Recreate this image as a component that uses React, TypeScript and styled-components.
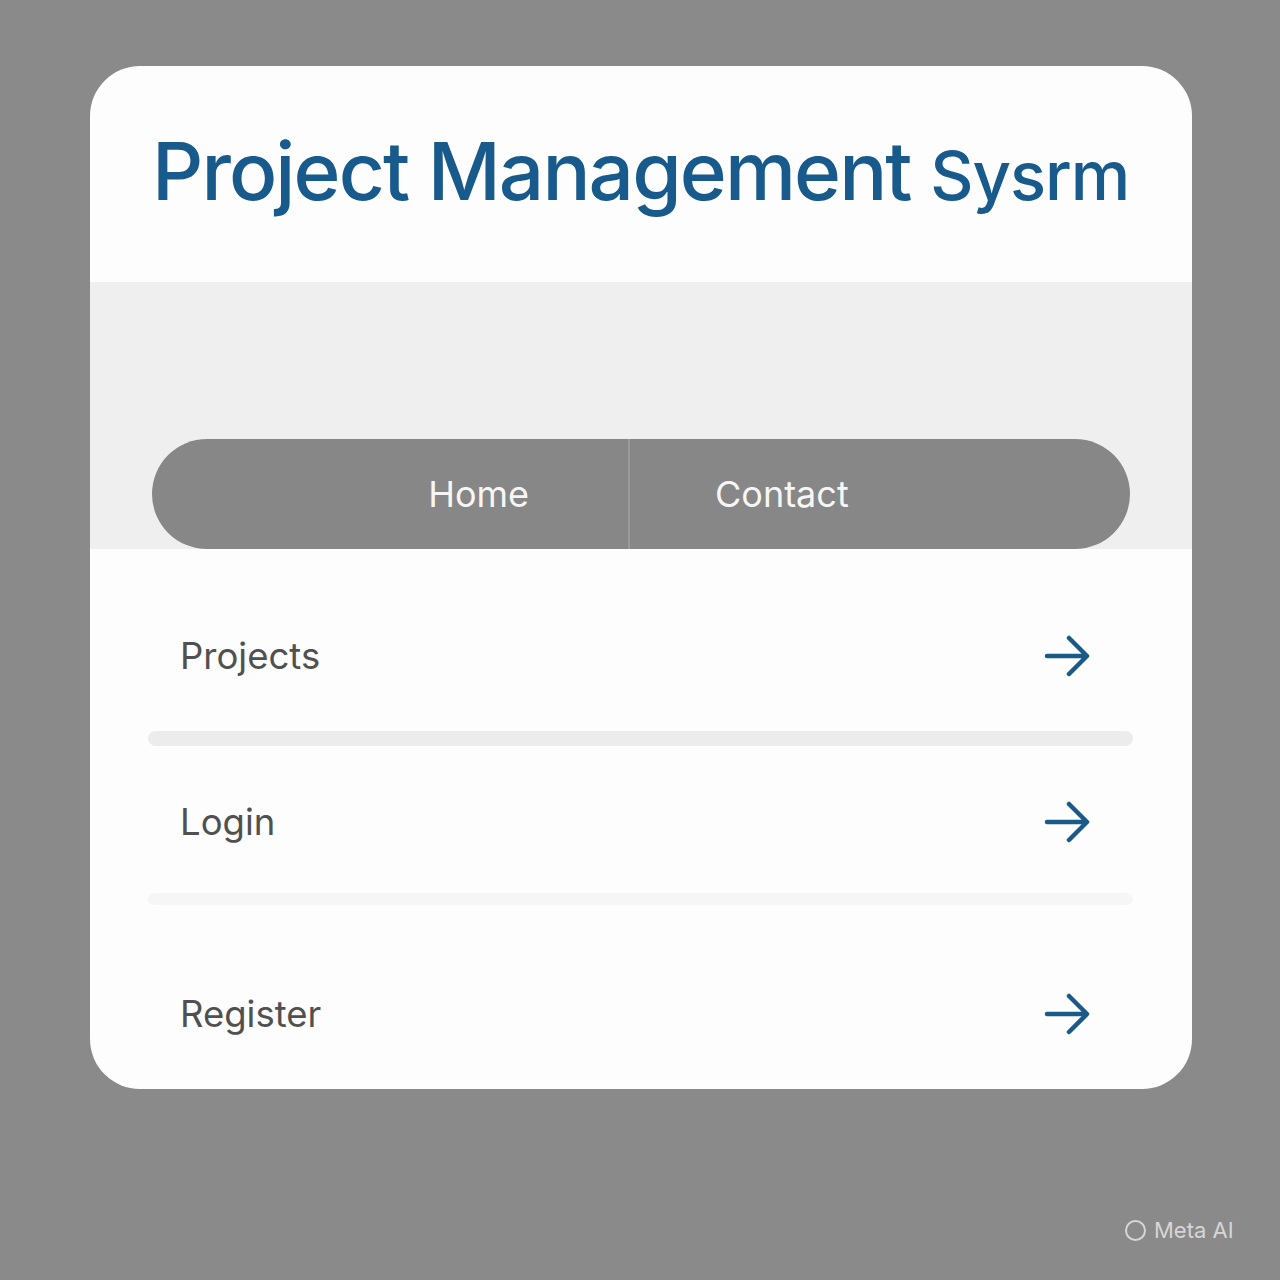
import React from "react";
import styled, { createGlobalStyle } from "styled-components";

const Global = createGlobalStyle`
  html, body { margin: 0; padding: 0; background: #8a8a8a; }
  body { font-family: Inter, "Noto Sans", sans-serif; }
`;

const Page = styled.div`
  width: 1280px;
  height: 1280px;
  box-sizing: border-box;
  padding: 66px 0 0 90px;
  position: relative;
  background: #8a8a8a;
`;

const Card = styled.div`
  width: 1102px;
  height: 1023px;
  background: #fdfdfd;
  border-radius: 50px;
  overflow: hidden;
  display: flex;
  flex-direction: column;
`;

const Header = styled.header`
  flex: 0 0 216px;
  box-sizing: border-box;
  padding: 55px 0 0 62px;
  display: flex;
  align-items: flex-start;
`;

const Title = styled.h1`
  margin: 0;
  font-family: Inter, sans-serif;
  font-weight: 500;
  font-size: 80px;
  line-height: 100px;
  letter-spacing: -1.9px;
  color: #175a8b;
  white-space: nowrap;
`;

const TitleTail = styled.span`
  font-size: 67px;
  letter-spacing: -1px;
`;

const Band = styled.div`
  flex: 0 0 267px;
  background: #efefef;
  box-sizing: border-box;
  padding: 0 62px;
  display: flex;
  align-items: flex-end;
`;

const Pill = styled.nav`
  width: 100%;
  height: 110px;
  border-radius: 55px;
  background: #878787;
  display: flex;
  overflow: hidden;
`;

const NavItem = styled.div<{ $first?: boolean }>`
  box-sizing: border-box;
  display: flex;
  align-items: center;
  justify-content: ${(p) => (p.$first ? "flex-end" : "flex-start")};
  width: ${(p) => (p.$first ? "478px" : "auto")};
  flex: ${(p) => (p.$first ? "0 0 auto" : "1")};
  padding: ${(p) => (p.$first ? "0 99px 0 0" : "0 0 0 85px")};
  border-right: ${(p) => (p.$first ? "2px solid #9a9a9a" : "none")};
  color: #f6f6f6;
  font-size: 36px;
  font-weight: 400;
`;

const List = styled.div`
  flex: 1;
  display: flex;
  flex-direction: column;
`;

const Row = styled.div<{ $h: number; $offset: number }>`
  flex: 0 0 ${(p) => p.$h}px;
  box-sizing: border-box;
  padding: ${(p) => p.$offset}px 102px 0 90px;
  display: flex;
  align-items: center;
  justify-content: space-between;
`;

const Label = styled.span`
  font-size: 36.5px;
  color: #505050;
  font-weight: 400;
`;

const Separator = styled.div<{ $strong?: boolean }>`
  flex: 0 0 ${(p) => (p.$strong ? "15px" : "12px")};
  margin: 0 59px 0 58px;
  border-radius: 8px;
  background: ${(p) => (p.$strong ? "#ececec" : "#f6f6f6")};
`;

const Watermark = styled.div`
  position: absolute;
  left: 1125px;
  top: 1217px;
  display: flex;
  align-items: center;
  gap: 8px;
  color: #d6d6d6;
  font-size: 22px;
  font-family: Inter, sans-serif;
`;

const Ring = styled.span`
  width: 17px;
  height: 17px;
  border: 2.5px solid #d6d6d6;
  border-radius: 50%;
`;

const Arrow = () => (
  <svg width="46" height="46" viewBox="0 0 46 46" fill="none">
    <path
      d="M3 23 H42 M25 5 L43 23 L25 41"
      stroke="#1a5a89"
      strokeWidth="4.5"
      strokeLinecap="round"
      strokeLinejoin="round"
    />
  </svg>
);

export default function App() {
  return (
    <>
      <Global />
      <Page>
        <Card>
          <Header>
            <Title>
              Project Management <TitleTail>Sysrm</TitleTail>
            </Title>
          </Header>
          <Band>
            <Pill>
              <NavItem $first>Home</NavItem>
              <NavItem>Contact</NavItem>
            </Pill>
          </Band>
          <List>
            <Row $h={182} $offset={32}>
              <Label>Projects</Label>
              <Arrow />
            </Row>
            <Separator $strong />
            <Row $h={147} $offset={5}>
              <Label>Login</Label>
              <Arrow />
            </Row>
            <Separator />
            <Row $h={184} $offset={34}>
              <Label>Register</Label>
              <Arrow />
            </Row>
          </List>
        </Card>
        <Watermark>
          <Ring />
          Meta AI
        </Watermark>
      </Page>
    </>
  );
}
